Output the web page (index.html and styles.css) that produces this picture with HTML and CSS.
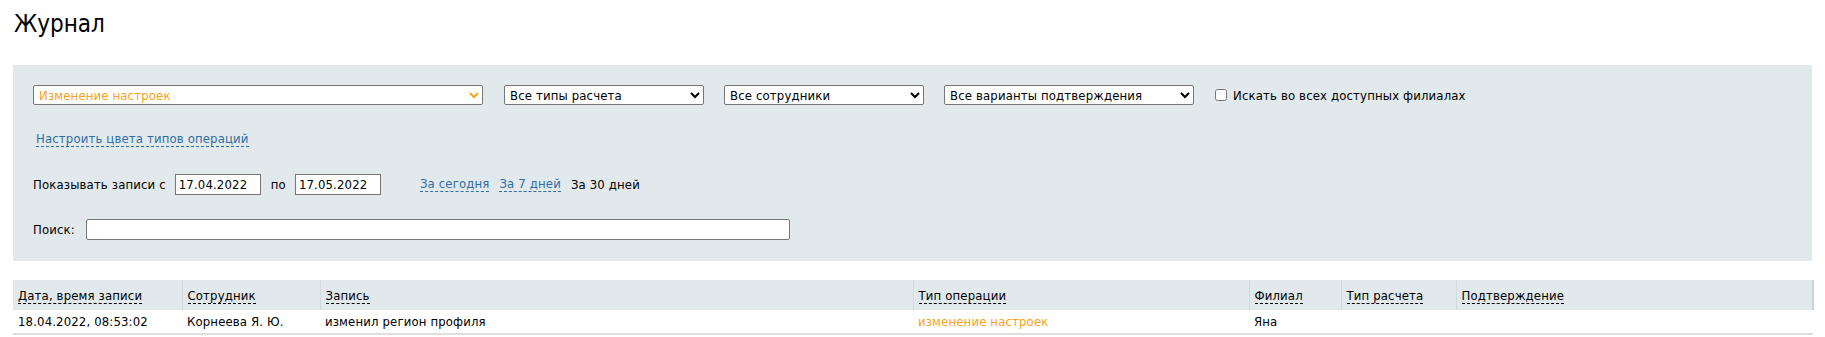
FILE: index.html
```html
<!DOCTYPE html>
<html lang="ru">
<head>
<meta charset="utf-8">
<title>Журнал</title>
<link rel="stylesheet" href="styles.css">
</head>
<body>
<h1 class="title">Журнал</h1>
<div class="filters">
  <div class="row row-selects">
    <select class="sel sel-type"><option>Изменение настроек</option></select>
    <select class="sel sel-pay"><option>Все типы расчета</option></select>
    <select class="sel sel-emp"><option>Все сотрудники</option></select>
    <select class="sel sel-conf"><option>Все варианты подтверждения</option></select>
    <label class="check"><input type="checkbox" class="cb"><span>Искать во всех доступных филиалах</span></label>
  </div>
  <div class="row row-link">
    <a class="dlink">Настроить цвета типов операций</a>
  </div>
  <div class="row row-dates">
    <span>Показывать записи с</span>
    <input class="date" type="text" value="17.04.2022">
    <span>по</span>
    <input class="date" type="text" value="17.05.2022">
    <span class="quick">
      <a class="dlink">За сегодня</a>
      <a class="dlink">За 7 дней</a>
      <span>За 30 дней</span>
    </span>
  </div>
  <div class="row row-search">
    <span>Поиск:</span>
    <input class="search" type="text">
  </div>
</div>
<table class="log">
  <colgroup>
    <col class="c1"><col class="c2"><col class="c3"><col class="c4"><col class="c5"><col class="c6"><col class="c7">
  </colgroup>
  <thead>
    <tr>
      <th><span class="sort">Дата, время записи</span></th>
      <th><span class="sort">Сотрудник</span></th>
      <th><span class="sort">Запись</span></th>
      <th><span class="sort">Тип операции</span></th>
      <th><span class="sort">Филиал</span></th>
      <th><span class="sort">Тип расчета</span></th>
      <th><span class="sort">Подтверждение</span></th>
    </tr>
  </thead>
  <tbody>
    <tr>
      <td>18.04.2022, 08:53:02</td>
      <td>Корнеева Я. Ю.</td>
      <td>изменил регион профиля</td>
      <td class="op">изменение настроек</td>
      <td>Яна</td>
      <td></td>
      <td></td>
    </tr>
  </tbody>
</table>
</body>
</html>
```
FILE: styles.css
```css
html, body {
  margin: 0;
  padding: 0;
  background: #fff;
}
body {
  padding: 0 13px 0 13px;
  font-family: "DejaVu Sans Condensed", "DejaVu Sans", sans-serif;
  font-size: 13px;
  letter-spacing: 0.15px;
  color: #000;
}
.title {
  margin: 0;
  padding-top: 9px;
  height: 65px;
  box-sizing: border-box;
  font-weight: normal;
  font-size: 24px;
  line-height: 30px;
  letter-spacing: 0;
  padding-left: 1px;
}
.filters {
  background: #e1e9ed;
  padding: 20px 20px 20px 20px;
  height: 196px;
  box-sizing: border-box;
}
.row {
  display: flex;
  align-items: center;
}
.row-selects {
  height: 20px;
  gap: 20px;
}
.sel {
  height: 20px;
  font-family: inherit;
  font-size: 13px;
  letter-spacing: 0.15px;
  color: #000;
  background: #fff;
  border: 1px solid #767676;
  border-radius: 2px;
  padding: 0 0 0 1px;
  margin: 0;
  box-sizing: border-box;
}
.sel-type { width: 450px; color: #f7a21b; margin-right: 1px; }
.sel-pay { width: 200px; }
.sel-emp { width: 200px; }
.sel-conf { width: 250px; }
.check {
  display: flex;
  align-items: center;
  gap: 6px;
}
.cb {
  margin: 0 0 0 1px;
  width: 12px;
  height: 12px;
}
.row-link {
  margin-top: 26px;
  height: 16px;
  padding-left: 3px;
}
.dlink {
  color: #2f6ea3;
  text-decoration: none;
  border-bottom: 1px dashed #2f6ea3;
  line-height: 14px;
  cursor: pointer;
}
.row-dates {
  margin-top: 27px;
  height: 21px;
}
.date {
  width: 86px;
  height: 21px;
  box-sizing: border-box;
  margin: 0 10px 0 9px;
  font-family: inherit;
  font-size: 13px;
  letter-spacing: 0.15px;
  border: 1px solid #767676;
  padding: 0 3px;
}
.quick {
  display: flex;
  gap: 10px;
  margin-left: 29px;
}
.row-search {
  margin-top: 24px;
  height: 21px;
}
.search {
  width: 704px;
  height: 21px;
  box-sizing: border-box;
  margin-left: 11px;
  border: 1px solid #767676;
  border-radius: 2px;
  font-family: inherit;
  font-size: 13px;
}
.log {
  margin-top: 19px;
  width: 1800px;
  border-collapse: collapse;
  table-layout: fixed;
}
.c1 { width: 169px; }
.c2 { width: 138px; }
.c3 { width: 593px; }
.c4 { width: 336px; }
.c5 { width: 92px; }
.c6 { width: 115px; }
.c7 { width: 357px; }
.log th {
  background: #e1e9ed;
  height: 30px;
  padding: 0 5px;
  text-align: left;
  font-weight: normal;
  border-right: 1px solid #d3d9dd;
  box-sizing: border-box;
}
.log th:last-child {
  border-right: 2px solid #d0d0d0;
}
.sort {
  border-bottom: 1px dashed #000;
  line-height: 14px;
}
.log td {
  height: 24px;
  padding: 0 5px;
  border-bottom: 2px solid #dedede;
  box-sizing: border-box;
  white-space: nowrap;
}
.op {
  color: #f7a21b;
}
```
